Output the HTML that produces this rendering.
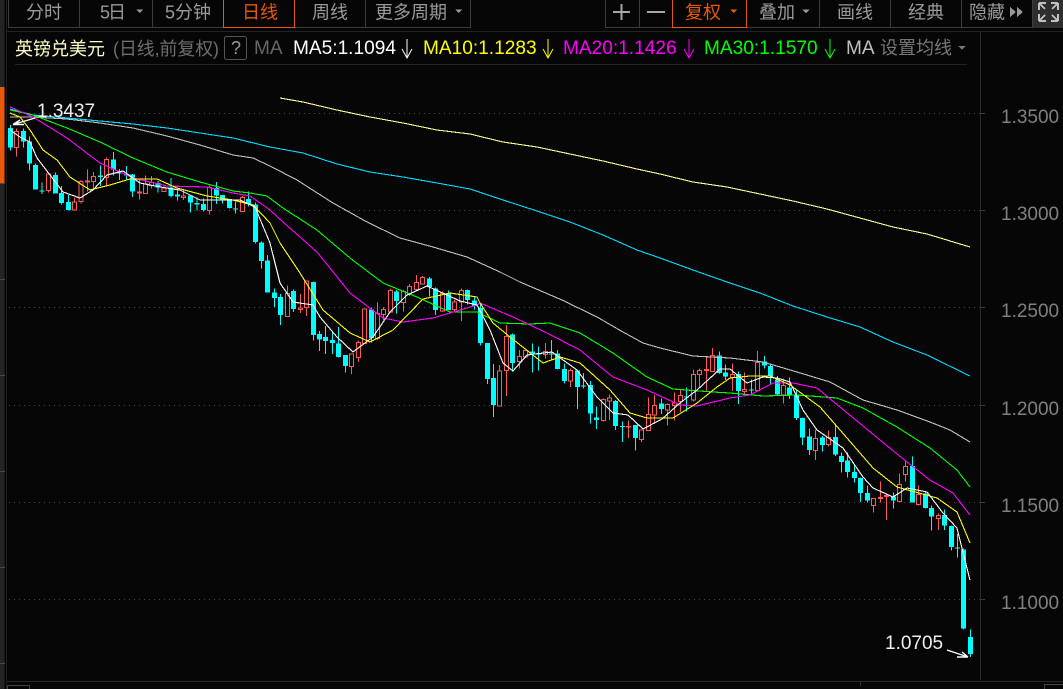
<!DOCTYPE html>
<html><head><meta charset="utf-8">
<style>
html,body{margin:0;padding:0;background:#060606;width:1063px;height:689px;overflow:hidden}
svg{display:block}
text{font-family:"Liberation Sans","Noto Sans CJK SC",sans-serif}
.t{font-size:18px;fill:#9a9a9a}
.o{font-size:18px;fill:#e8590c}
.l{font-size:18px}
.m{font-size:19.1px}
.n{font-size:19px;fill:#808080}
.w{fill:none;stroke:#00ffff;stroke-width:3}
.b{fill:none;stroke:#00ffff;stroke-width:15}
.rw{fill:none;stroke:#ff5a5a;stroke-width:3}
.rb{fill:#060606;stroke:#ff5a5a;stroke-width:3}
.ma{fill:none;stroke-width:1.1}
.g{stroke:#444;stroke-width:1;stroke-dasharray:1 4}
.bx{fill:none;stroke:#3c3c3c;stroke-width:1}
</style></head><body>
<svg width="1063" height="689" viewBox="0 0 1063 689" xmlns="http://www.w3.org/2000/svg" shape-rendering="crispEdges">
<rect width="1063" height="689" fill="#060606"/>
<!-- left strip -->
<rect x="0" y="0" width="4.5" height="689" fill="#242424"/>
<rect x="0" y="87" width="4.5" height="96" fill="#e8590c"/>
<path d="M0 279.5H5M0 375.5H5M0 471.5H5M0 567.5H5M0 663.5H5M0 183.5H5" stroke="#484848"/>
<path d="M6.5 0V689" stroke="#1e1e1e"/>
<!-- frame -->
<path d="M7 31.5H1063" stroke="#222"/>
<path d="M15 64.5H967" stroke="#242424"/>
<path d="M980.5 31V680" stroke="#2a2a2a"/>
<path d="M7 681.5H1063" stroke="#2a2a2a"/>
<path d="M860.5 681V686" stroke="#333"/>
<path d="M7.5 689V685.5H29.5V689M1044.5 689V684.5H1063" fill="none" stroke="#444"/>
<!-- toolbar -->
<path class="bx" d="M8.5 0V27.5H470.5V0M79.5 0V27.5M152.5 0V27.5M294.5 0V27.5M365.5 0V27.5"/>
<path class="bx" d="M605.5 0V27.5H672.5M639.5 0V27.5M746.5 27.5H961.5V0M819.5 0V27.5M890.5 0V27.5"/>
<path class="bx" d="M961.5 0V27.5H1032.5V0"/>
<path fill="none" stroke="#e05a10" d="M223.5 0V27.5H294.5V0M672.5 0V27.5H746.5V0"/>
<text class="t" x="26" y="18.5">分时</text>
<text class="t" x="100" y="18.5" textLength="26">5日</text>
<path d="M136 9.5h7l-3.5 3.5z" fill="#9a9a9a"/>
<text class="t" x="165" y="18.5">5分钟</text>
<text class="o" x="242" y="18.5">日线</text>
<text class="t" x="312" y="18.5">周线</text>
<text class="t" x="375" y="18.5">更多周期</text>
<path d="M455 9.5h7.5l-3.7 3.5z" fill="#9a9a9a"/>
<path d="M613 12H630M621.5 4V20" stroke="#a8a8a8" stroke-width="2"/>
<path d="M647 12H665" stroke="#a8a8a8" stroke-width="2"/>
<text class="o" x="685" y="18.5">复权</text>
<path d="M730 9.5h7.5l-3.7 3.5z" fill="#e8590c"/>
<text class="t" x="759" y="18.5">叠加</text>
<path d="M802 9.5h8l-4 3.5z" fill="#9a9a9a"/>
<text class="t" x="837" y="18.5">画线</text>
<text class="t" x="908" y="18.5">经典</text>
<text class="t" x="969" y="18.5">隐藏</text>
<path d="M1010 7l6 5-6 5zM1017 7l6 5-6 5z" fill="#9a9a9a"/>
<rect x="1033" y="0" width="30" height="28" fill="#2e2e2e"/>
<g fill="none" stroke="#c0c0c0" stroke-width="2">
<path d="M1039 3H1046M1039 3V10M1040 4L1045 9"/>
<path d="M1058 3H1051M1058 3V10M1057 4L1052 9"/>
<path d="M1039 21H1046M1039 21V14M1040 20L1045 15"/>
<path d="M1058 21H1051M1058 21V14M1057 20L1052 15"/>
</g>
<!-- legend -->
<g shape-rendering="auto">
<text class="l" x="15" y="55" fill="#ffffc8">英镑兑美元</text>
<text class="l" x="113" y="55" fill="#6e6e6e" textLength="106" lengthAdjust="spacingAndGlyphs">(日线,前复权)</text>
<rect x="224.5" y="36.5" width="22" height="23" rx="2" fill="none" stroke="#555"/>
<text class="l" x="231" y="54" fill="#999">?</text>
<text class="m" x="254" y="54" fill="#666">MA</text>
<text class="m" x="293" y="54" fill="#fff">MA5:1.1094</text>
<text class="m" x="423" y="54" fill="#ffff00">MA10:1.1283</text>
<text class="m" x="563" y="54" fill="#ff00ff">MA20:1.1426</text>
<text class="m" x="704" y="54" fill="#00ff00">MA30:1.1570</text>
<svg x="846" y="36" width="30" height="26"><text class="m" x="0" y="18" fill="#c0c0c0">MA</text></svg>
<text class="l" x="880" y="54" fill="#777">设置均线</text>
</g>
<path d="M958 46h8l-4 3.5z" fill="#777"/>
<g fill="none" shape-rendering="auto" stroke-width="1">
<path stroke="#fff" d="M407 39V58M402 49L407 58L412 49"/>
<path stroke="#ffff00" d="M548 39V58M543 49L548 58L553 49"/>
<path stroke="#ff00ff" d="M689 39V58M684 49L689 58L694 49"/>
<path stroke="#00ff00" d="M830 39V58M825 49L830 58L835 49"/>
</g>
<!-- grid -->
<path class="g" d="M9 113.5H980M9 210.5H980M9 307.5H980M9 405.5H980M9 502.5H980M9 599.5H980"/>
<path stroke="#3a3a3a" d="M981 113.5H985M981 210.5H985M981 307.5H985M981 405.5H985M981 502.5H985M981 599.5H985"/>
<g shape-rendering="auto">
<text class="n" x="1001" y="123">1.3500</text>
<text class="n" x="1001" y="220">1.3000</text>
<text class="n" x="1001" y="317">1.2500</text>
<text class="n" x="1001" y="415">1.2000</text>
<text class="n" x="1001" y="512">1.1500</text>
<text class="n" x="1001" y="609">1.1000</text>
</g>
<!-- candles -->
<g transform="translate(0,100) scale(.33333)">
<path class="w" d="M32 75V152M70 85V143M89 110V212M106 190V269M126 248V282M166 217V281M184 258V314M205 285V332M301 196V258M340 156V226M359 207V240M379 198V240M397 222V291M474 243V278M513 234V292M532 268V302M571 285V338M591 292V332M610 295V334M649 246V312M667 285V310M688 297V326M707 305V341M745 275V320M766 308V430M785 424V506M802 465V578"/>
<path class="b" d="M32 84V142M70 93V125M89 124V191M106 195V269M126 271V274M166 225V281M184 279V309M205 306V330M301 227V231M340 178V208M359 218V221M379 222V226M397 224V275M474 249V263M513 262V288M532 284V290M571 287V308M591 309V314M610 312V330M649 264V286M667 285V298M688 299V324M707 325V329M745 297V312M766 313V426M785 427V483M802 481V578"/>
<path class="rw" d="M50 85V94M50 142V170M146 218V222M146 272V278M223 292V306M243 240V244M243 304V311M262 208V243M262 246V275M280 216V229M280 245V268M319 172V178M319 233V260M418 238V276M418 279V299M436 226V252M455 228V248M455 256V266M492 253V264M551 268V288M551 293V300M629 257V262M629 331V344M727 288V292"/>
<path class="rb" d="M44 94H56V142H44ZM140 222H152V272H140ZM217 306H229V330H217ZM237 244H249V304H237ZM256 243H268V246H256ZM274 229H286V245H274ZM313 178H325V233H313ZM412 276H424V279H412ZM430 252H442V281H430ZM449 248H461V256H449ZM486 264H498V275H486ZM545 288H557V293H545ZM623 262H635V331H623ZM721 292H733V335H721Z"/>
</g>
<g transform="translate(250,180) scale(.33333)">
<path class="w" d="M73 325V381M91 342V435M130 328V396M190 305V482M208 453V513M226 438V522M247 456V522M265 441V533M286 525V577M364 382V488M439 330V400M538 291V349M556 322V405M595 332V390M652 328V373M673 350V389"/>
<path class="b" d="M73 337V354M91 351V405M130 333V387M190 306V465M208 462V478M226 471V483M247 480V489M265 490V531M286 525V558M364 388V474M439 334V363M538 295V321M556 325V390M595 339V390M652 330V360M673 362V378"/>
<path class="rw" d="M112 316V340M151 342V384M151 389V399M169 383V408M304 560V582M325 482V487M325 533V546M382 367V400M382 476V480M400 381V388M400 404V420M421 325V331M421 396V399M460 330V334M460 367V394M478 312V319M478 342V348M499 285V307M517 288V292M577 335V340M577 393V396M613 358V366M613 389V397M634 325V332M634 366V423"/>
<path class="rb" d="M106 340H118V410H106ZM145 384H157V389H145ZM163 303H175V383H163ZM298 522H310V560H298ZM319 487H331V533H319ZM337 387H349V491H337ZM376 400H388V476H376ZM394 388H406V404H394ZM415 331H427V396H415ZM454 334H466V367H454ZM472 319H484V342H472ZM493 307H505V329H493ZM511 292H523V312H511ZM571 340H583V393H571ZM607 366H619V389H607ZM628 332H640V366H628Z"/>
</g>
<g transform="translate(480,300) scale(.33333)">
<path class="w" d="M1 12V136M22 129V252M40 192V351M97 100V215M157 130V218M175 140V212M214 120V180M232 150V208M253 191V250M292 210V327M310 219V265M331 243V371M349 320V387M406 300V390M427 364V426M466 375V452M544 296V342M619 262V335M718 155V222M736 193V240M775 215V312"/>
<path class="b" d="M1 24V129M22 129V237M40 234V315M97 103V189M157 154V160M175 159V163M214 160V163M232 160V207M253 207V243M292 211V261M310 256V259M331 255V340M349 352V360M406 303V378M427 378V381M466 375V414M544 311V327M619 289V293M718 166V219M736 217V229M775 222V273"/>
<path class="rw" d="M58 195V213M79 75V109M79 212V288M118 150V169M118 185V205M136 150V152M196 129V154M196 164V175M271 205V211M271 243V261M370 295V299M370 362V365M388 283V294M388 303V360M445 362V379M445 381V414M484 419V426M505 293V343M523 285V316M523 345V372M562 310V313M562 330V377M583 277V309M583 317V362M601 270V286M601 305V336M640 208V223M640 300V305M658 205V211M658 223V260M679 173V208M679 212V274M697 144V166M757 190V223M757 233V273M793 218V268M793 274V285"/>
<path class="rb" d="M52 213H64V318H52ZM73 109H85V212H73ZM112 169H124V185H112ZM130 152H142V171H130ZM190 154H202V164H190ZM265 211H277V243H265ZM364 299H376V362H364ZM382 294H394V303H382ZM439 379H451V381H439ZM478 390H490V419H478ZM499 343H511V392H499ZM517 316H529V345H517ZM556 313H568V330H556ZM577 309H589V317H577ZM595 286H607V305H595ZM634 223H646V300H634ZM652 211H664V223H652ZM673 208H685V212H673ZM691 166H703V214H691ZM751 223H763V233H751ZM787 268H799V274H787Z"/>
</g>
<g transform="translate(730,340) scale(.33333)">
<path class="w" d="M64 118V160M103 48V85M121 72V135M142 108V165M178 112V177M199 148V240M217 233V315M238 265V345M277 288V335M316 255V348M334 338V398M352 338V413M373 372V428M391 412V486M412 436V488M490 458V506M547 349V488M586 456V505M604 497V572M643 508V570M664 556V632M682 582V653M700 625V869M721 868V951"/>
<path class="b" d="M64 148V151M103 64V77M121 78V110M142 118V163M178 142V163M199 163V234M217 234V293M238 289V330M277 292V315M316 291V343M334 348V366M352 361V396M373 396V414M391 414V459M412 459V481M490 469V482M547 378V488M586 460V504M604 504V530M643 525V556M664 558V621M682 622V626M700 628V866M721 891V942"/>
<path class="rw" d="M82 33V67M160 115V137M160 165V190M256 268V295M256 331V360M295 272V293M295 314V320M430 497V518M451 424V473M451 476V488M469 462V467M469 470V540M508 400V434M526 362V380M526 404V425M565 436V463M565 493V497M625 520V526M625 536V570"/>
<path class="rb" d="M76 67H88V151H76ZM154 137H166V165H154ZM250 295H262V331H250ZM289 293H301V314H289ZM424 475H436V497H424ZM445 473H457V476H445ZM463 467H475V470H463ZM502 434H514V485H502ZM520 380H532V404H520ZM559 463H571V493H559ZM619 526H631V536H619Z"/>
</g>
<!-- moving averages -->
<polyline class="ma" stroke="#ffff99" points="280,98 303,102 337,110 370,117 403,123 437,130 470,134 503,142 537,147 570,154 603,161 637,169 660,174 693,182 727,187 760,194 793,201 827,209 860,218 893,227 927,234 970,247"/>
<polyline class="ma" stroke="#00d8ff" points="10,109 33,115 67,118 100,121 133,124 167,128 200,133 233,138 270,147 303,153 337,164 370,172 403,177 437,183 470,189 503,200 537,211 570,222 603,235 637,250 660,258 693,270 727,282 760,293 793,306 827,317 860,327 893,342 927,355 970,376"/>
<polyline class="ma" stroke="#c0c0c0" points="10,117 33,117 67,119 100,123 133,128 167,136 200,145 233,155 253,158 270,166 297,180 333,203 367,222 400,238 433,247 467,257 500,272 520,282 562,300 597,317 623,332 643,343 660,348 693,356 730,358 763,362 797,372 830,382 863,400 897,410 930,422 950,430 970,442"/>
<polyline class="ma" stroke="#00ff00" points="10,110 33,115 67,128 100,142 133,158 167,172 200,182 233,191 250,193 267,196 283,208 317,230 350,258 383,283 417,297 450,312 477,312 500,323 530,324 550,323 580,333 613,353 647,377 673,389 713,392 730,393 763,396 797,395 837,398 863,408 897,427 930,448 957,470 970,487"/>
<polyline class="ma" stroke="#ff00ff" points="10,107 33,117 67,138 100,163 133,178 167,186 207,187 233,193 250,196 270,210 283,222 317,252 350,293 383,318 403,322 433,318 477,305 480,303 513,317 547,333 580,350 613,377 647,390 680,405 697,406 730,398 750,395 773,383 793,383 817,388 840,407 880,440 907,462 930,480 953,493 970,515"/>
<polyline class="ma" stroke="#ffff00" points="10,113 20,117 30,130 43,150 57,160 70,177 90,190 110,185 130,179 157,179 177,188 207,196 233,200 253,205 270,223 280,243 300,273 323,310 350,333 370,342 393,330 423,299 450,293 477,297 480,303 493,323 510,337 543,363 560,357 580,363 610,390 630,413 647,418 673,418 697,403 717,387 730,378 750,376 770,376 790,385 820,407 847,438 873,468 897,487 937,498 957,512 970,543"/>
<polyline class="ma" stroke="#ffffff" points="10,130 20,137 30,142 37,158 50,175 63,192 80,198 93,190 107,175 123,171 140,183 160,187 180,190 200,200 217,200 240,200 255,207 270,243 280,283 293,302 313,305 320,317 337,337 353,352 373,337 390,312 407,295 427,286 447,295 460,301 477,305 490,330 503,363 513,371 527,355 552,352 577,370 597,397 613,413 628,415 643,429 662,419 680,403 697,390 720,369 730,369 747,383 763,377 777,378 790,382 803,410 817,430 843,448 863,477 873,488 893,497 907,488 927,492 943,513 957,528 970,580"/>
<!-- high / low marks -->
<g shape-rendering="auto">
<text x="37" y="117" font-size="19" fill="#f0f0f0">1.3437</text>
<path d="M35 118L13 124.5M13 124.5H24M13 124.5L20 120" fill="none" stroke="#fff" stroke-width="1.4"/>
<text x="885" y="649" font-size="19" fill="#f0f0f0">1.0705</text>
<path d="M947 650L968 657M957 657H968M962 652L968 657" fill="none" stroke="#fff" stroke-width="1.4"/>
</g>
</svg>
</body></html>
